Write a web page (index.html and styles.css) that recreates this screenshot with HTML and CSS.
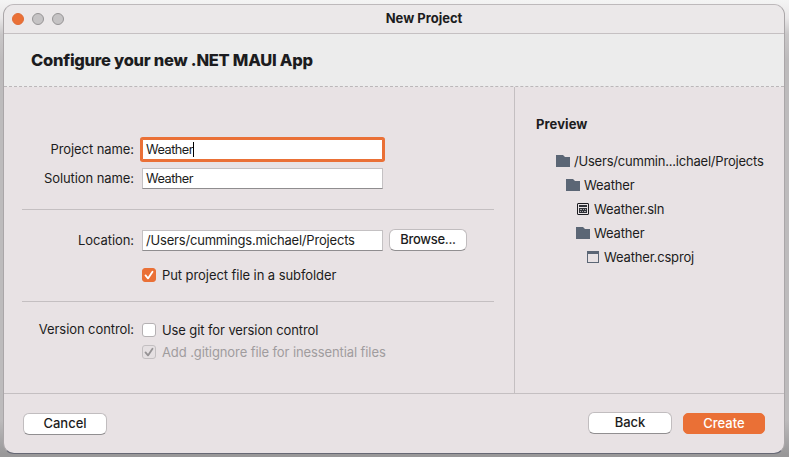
FILE: index.html
```html
<!DOCTYPE html>
<html lang="en">
<head>
<meta charset="utf-8">
<title>New Project</title>
<link rel="stylesheet" href="styles.css">
</head>
<body>
<div class="window">
  <header class="titlebar">
    <div class="lights"><i class="light close"></i><i class="light"></i><i class="light"></i></div>
    <div class="title"><span>New Project</span></div>
  </header>
  <div class="heading"><h1>Configure your new .NET MAUI App</h1></div>
  <main class="content">
    <section class="form">
      <div class="group names">
        <div class="row"><label class="label">Project name:</label><div class="field focused"><span class="name">Weather</span><i class="caret"></i></div></div>
        <div class="row"><label class="label">Solution name:</label><div class="field"><span class="name">Weather</span></div></div>
      </div>
      <div class="group location">
        <div class="row"><label class="label">Location:</label><div class="field"><span class="path">/Users/cummings.michael/Projects</span></div><button class="button browse"><span>Browse...</span></button></div>
        <div class="option"><i class="check on"><svg viewBox="0 0 14 14"><path d="M3.5 7.4 6 10.4 10.5 3.7"/></svg></i><span class="sub">Put project file in a subfolder</span></div>
      </div>
      <div class="group version">
        <div class="row"><label class="label">Version control:</label><div class="option"><i class="check"></i><span class="git">Use git for version control</span></div></div>
        <div class="option disabled"><i class="check"><svg viewBox="0 0 14 14"><path d="M3.5 7.4 6 10.4 10.5 3.7"/></svg></i><span class="ignore">Add .gitignore file for inessential files</span></div>
      </div>
    </section>
    <aside class="preview">
      <h2>Preview</h2>
      <ul class="tree">
        <li class="l0"><svg class="folder" viewBox="0 0 14 12"><path d="M0 0H7L9 2H14V12H0Z"/></svg><span class="root">/Users/cummin...ichael/Projects</span></li>
        <li class="l1"><svg class="folder" viewBox="0 0 14 12"><path d="M0 0H7L9 2H14V12H0Z"/></svg><span>Weather</span></li>
        <li class="l2"><svg class="file" viewBox="0 0 12 12"><rect class="sln" x=".5" y=".5" width="11" height="11" rx=".5"/><path class="ink" d="M2 2H10V4H2ZM2 5H10V10H2Z"/><path class="dots" d="M3 6.5H5M6 6.5H7M8 6.5H9M3 8.5H4M5 8.5H6M7 8.5H9"/></svg><span>Weather.sln</span></li>
        <li class="l2 nested"><svg class="folder" viewBox="0 0 14 12"><path d="M0 0H7L9 2H14V12H0Z"/></svg><span>Weather</span></li>
        <li class="l3"><svg class="file" viewBox="0 0 12 12"><rect class="proj" x=".5" y=".5" width="11" height="11"/><path class="bar" d="M0 0H12V3H0Z"/></svg><span>Weather.csproj</span></li>
      </ul>
    </aside>
  </main>
  <footer class="actions">
    <button class="button cancel"><span>Cancel</span></button>
    <button class="button back"><span>Back</span></button>
    <button class="button primary"><span>Create</span></button>
  </footer>
</div>
</body>
</html>
```

FILE: styles.css
```css
* { box-sizing: border-box; }
html { height: 100%; }
body {
  margin: 0;
  height: 457px;
  padding: 4px 4px 3px 3px;
  overflow: hidden;
  background: linear-gradient(#f4f4f4 0, #e9e7e8 18px, #c9c7c8 34px, #bdbbbc 60px, #bdbbbc 420px, #999899 454px);
  font: 13px/16px Inter, "Liberation Sans", sans-serif;
  color: #1c1c20;
}
.window {
  width: 782px;
  height: 450px;
  border: 1px solid #aaa6a8;
  border-top-color: #bdb9bb;
  border-bottom-color: #666874;
  border-radius: 11px;
  overflow: hidden;
  background: #e8e2e4;
  display: flex;
  flex-direction: column;
}
.titlebar {
  height: 29px;
  border-bottom: 1px solid #c5c0c2;
  background: #ebe8e9;
  display: grid;
  grid-template-columns: 100px 1fr 100px;
  align-items: center;
  flex: none;
}
.lights { display: flex; gap: 8px; padding-left: 8px; }
.light { width: 12px; height: 12px; border-radius: 50%; background: #c5c3c4; border: 1px solid #969495; }
.light.close { background: #ea7036; border-color: #df6c37; }
.title { text-align: center; font-weight: 700; padding: 0 0 2px 60px; }
.heading {
  height: 53px;
  flex: none;
  display: flex;
  align-items: center;
  padding: 0 0 1px 27px;
  background: #ececec;
  border-bottom: 1px dashed #bbb7b9;
}
h1 { margin: 0; font-size: 16.5px; line-height: 20px; font-weight: 800; letter-spacing: -.26px; white-space: nowrap; }
.content { height: 307px; flex: none; display: grid; grid-template-columns: 511px 1fr; border-bottom: 1px solid #c4bfc1; }
.form { padding: 0 20px 0 18px; border-right: 1px solid #c4bfc1; }
.group { display: flex; flex-direction: column; }
.names { height: 123px; padding-top: 52px; gap: 8px; border-bottom: 1px solid #c4bfc1; }
.location { height: 92px; padding-top: 20px; gap: 16px; border-bottom: 1px solid #c4bfc1; }
.version { padding-top: 20px; gap: 6px; }
.row { display: flex; align-items: center; }
.label { width: 112px; margin-right: 8px; padding-bottom: 2px; text-align: right; white-space: nowrap; letter-spacing: -.08px; }
.version .label { padding: 0; margin-top: -1px; margin-bottom: 1px; }
.field {
  width: 241px;
  height: 21px;
  padding: 0 0 2px 3px;
  background: #fff;
  border: 1px solid #c4c1c3;
  border-bottom-color: #8f8d8f;
  display: flex;
  align-items: center;
  white-space: nowrap;
}
.names .field { padding-bottom: 0; }
.field.focused { box-shadow: 0 0 0 2px #ea7036; border-color: #ea7036; border-radius: 1px; }
.name { font-size: 12.75px; letter-spacing: -.5px; }
.path { letter-spacing: -.19px; }
.sub { letter-spacing: -.07px; }
.git, .ignore { letter-spacing: -.1px; }
.root { letter-spacing: -.21px; }
.caret { width: 1px; height: 15px; background: #000; }
.button {
  height: 22px;
  padding: 0 0 2px;
  border: 1px solid #c1bdbf;
  border-bottom-color: #918f91;
  border-radius: 6px;
  background: #fff;
  color: inherit;
  font: inherit;
  font-weight: 500;
}
.browse { width: 78px; margin: -1px 0 0 6px; letter-spacing: -.3px; }
.option { display: flex; align-items: center; gap: 6px; height: 16px; white-space: nowrap; }
.group > .option { margin-left: 120px; }
.check { width: 14px; height: 14px; border: 1px solid #b5b1b3; border-radius: 3px; background: #fff; }
.check.on { background: #ea7036; border-color: #ea7036; }
.check svg { display: block; width: 14px; height: 14px; margin: -1px; fill: none; stroke: #fff; stroke-width: 1.8; stroke-linecap: round; stroke-linejoin: round; }
.disabled { color: #a09c9e; }
.disabled .check { background: #e5e0e2; border-color: #c3bfc1; }
.disabled svg { stroke: #969395; }
.preview { padding: 29px 0 0 21px; }
h2 { margin: 0; font-size: 13px; line-height: 16px; font-weight: 700; letter-spacing: .08px; }
.tree { list-style: none; margin: 17px 0 0; padding: 0; letter-spacing: -.17px; }
.tree li { height: 24px; display: flex; align-items: center; gap: 4px; white-space: nowrap; }
.l0 { margin-left: 20px; }
.l1 { margin-left: 30px; }
.l2 { margin-left: 41px; }
.l2.nested { margin-left: 40px; }
.l3 { margin-left: 51px; }
.folder { width: 14px; height: 12px; fill: #5b6675; }
.file { width: 12px; height: 12px; margin-right: 1px; fill: none; }
.sln { stroke: #1c1c20; }
.ink { fill: #303238; }
.dots { stroke: #a9a7ab; }
.proj { stroke: #5b6675; }
.bar { fill: #5b6675; }
.actions { display: flex; align-items: center; padding: 0 19px; flex: 1; }
.cancel, .back { width: 84px; }
.back { margin: -1px 11px 1px auto; }
.primary { width: 82px; height: 21px; background: #ea7036; border-color: #ea7036; color: #fff; border-radius: 5px; }
```
